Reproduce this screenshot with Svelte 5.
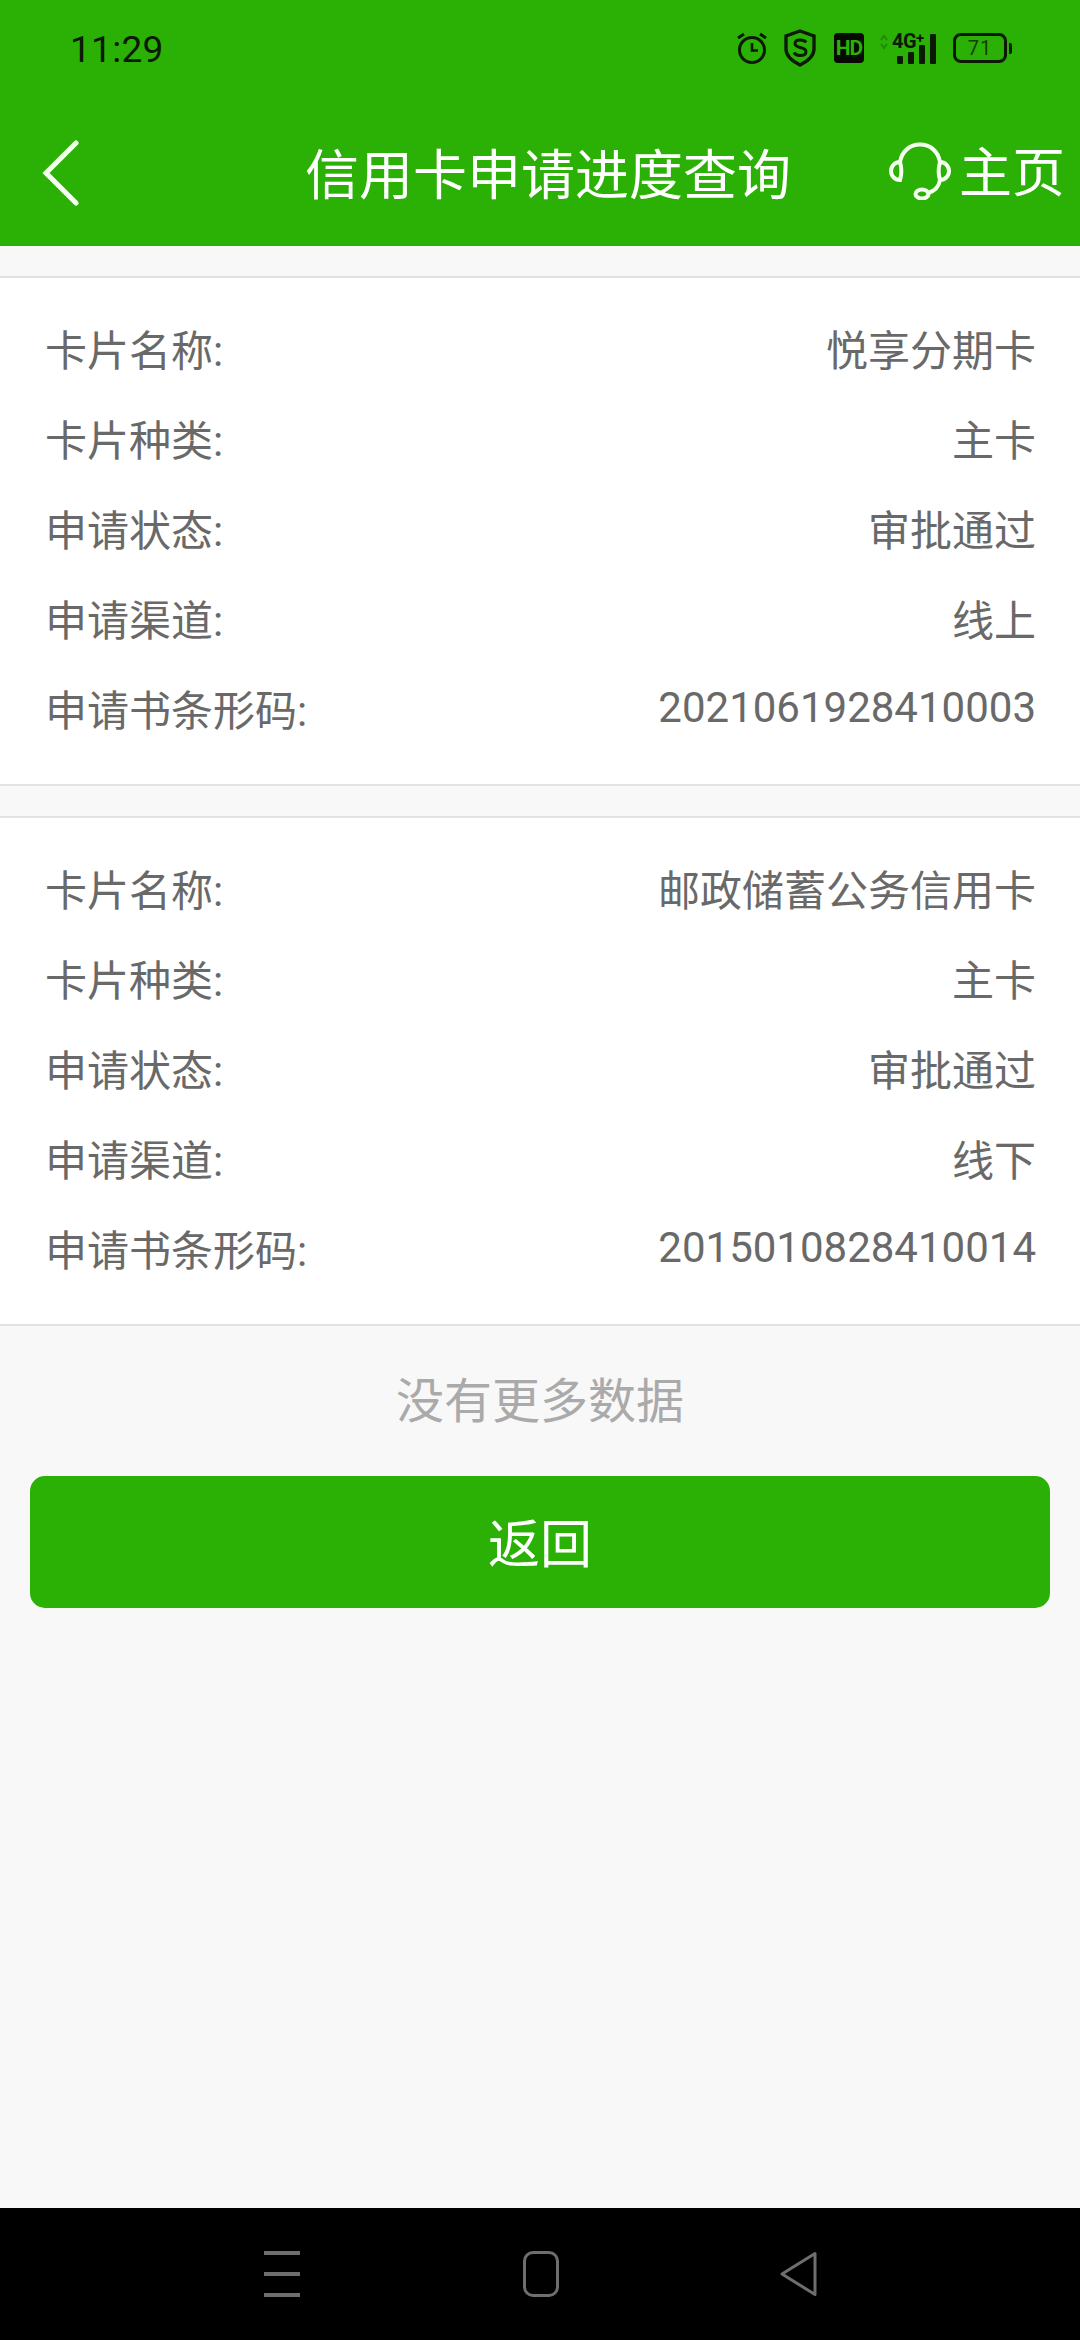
<script>
  const cards = [
    { name: '悦享分期卡', kind: '主卡', status: '审批通过', channel: '线上', code: '2021061928410003' },
    { name: '邮政储蓄公务信用卡', kind: '主卡', status: '审批通过', channel: '线下', code: '2015010828410014' }
  ];
</script>

<div class="page">
  <header class="top">
    <div class="status">
      <span class="time">11:29</span>
      <div class="icons">
        <svg class="ic" width="34" height="34" viewBox="0 0 34 34" fill="none" stroke="#0b1a04" stroke-width="3">
          <circle cx="17" cy="19" r="12.5"/>
          <path d="M17 12v7.5h6" stroke-width="2.6"/>
          <path d="M3 7l6-4M31 7l-6-4" stroke-width="3"/>
        </svg>
        <svg class="ic shield" width="34" height="38" viewBox="0 0 34 38" fill="none" stroke="#0b1a04" stroke-width="3.4">
          <path d="M17 2l14 5v13c0 7-6 12-14 16C9 32 3 27 3 20V7z"/>
          <path d="M23 13.500c-1-2-3-2.500-6-2.500-3 0-5 1.500-5 3.800 0 5 11 2.500 11 8 0 2.500-2.500 3.700-6 3.700-3 0-5-1-6-3" stroke-width="3"/>
        </svg>
        <span class="hd">HD</span>
        <div class="signal">
          <svg class="arrows" width="8" height="16" viewBox="0 0 8 16" fill="none" stroke="#1f8a06" stroke-width="2">
            <path d="M1 6l3-4 3 4M1 10l3 4 3-4"/>
          </svg>
          <span class="net">4G<sup>+</sup></span>
          <div class="bars">
            <i class="b1"></i><i class="b2"></i><i class="b3"></i><i class="b4"></i>
          </div>
        </div>
        <div class="battery"><span>71</span></div>
        <i class="cap"></i>
      </div>
    </div>
    <nav class="bar">
      <svg class="back" width="40" height="66" viewBox="0 0 40 66" fill="none" stroke="#f4fff0" stroke-width="5" stroke-linecap="round">
        <path d="M35 3L5 33l30 30"/>
      </svg>
      <h1>信用卡申请进度查询</h1>
      <div class="home">
        <svg width="62" height="58" viewBox="0 0 62 58" fill="none" stroke="#f4fff0" stroke-width="4" stroke-linecap="round">
          <path d="M11 20C13 9 21 2.500 31 2.500s18 6.500 20 17.500"/>
          <path d="M11 20C6 20 2 24 2 29s4 9 9 9c1.500-5 1.500-13 0-18z"/>
          <path d="M51 20c5 0 9 4 9 9s-4 9-9 9c-1.500-5-1.500-13 0-18z"/>
          <path d="M51 38c-1 6-5 11-12 13"/>
          <ellipse cx="33" cy="52" rx="6.500" ry="4.500"/>
        </svg>
        <span>主页</span>
      </div>
    </nav>
  </header>

  <main class="content">
    {#each cards as c}
      <section class="card">
        <div class="row"><span>卡片名称:</span><span>{c.name}</span></div>
        <div class="row"><span>卡片种类:</span><span>{c.kind}</span></div>
        <div class="row"><span>申请状态:</span><span>{c.status}</span></div>
        <div class="row"><span>申请渠道:</span><span>{c.channel}</span></div>
        <div class="row"><span>申请书条形码:</span><span>{c.code}</span></div>
      </section>
    {/each}
    <p class="more">没有更多数据</p>
    <button class="ret">返回</button>
  </main>

  <footer class="navbar">
    <div class="menu"><i></i><i></i><i></i></div>
    <div class="square"></div>
    <svg width="38" height="46" viewBox="0 0 38 46" fill="none" stroke="#6e6e6e" stroke-width="3" stroke-linejoin="round">
      <path d="M35 2.500v41L2 23z"/>
    </svg>
  </footer>
</div>

<style>
  :global(body) { margin: 0; background: #f8f8f8; }
  .page {
    width: 1080px;
    height: 2340px;
    display: flex;
    flex-direction: column;
    font-family: Roboto, "Noto Sans CJK SC", sans-serif;
    background: #f8f8f8;
    overflow: hidden;
  }
  .top { background: #2bb106; height: 246px; flex: none; display: flex; flex-direction: column; }
  .status {
    height: 96px;
    box-sizing: border-box;
    padding: 0 0 0 70px;
    display: flex;
    align-items: center;
    justify-content: space-between;
  }
  .time { font-size: 37px; color: #0b1a04; letter-spacing: 0.3px; padding-top: 2px; }
  .icons { display: flex; align-items: center; margin-right: 68px; }
  .ic { display: block; }
  .shield { margin-left: 14px; }
  .hd {
    margin-left: 17px;
    width: 30px;
    height: 30px;
    background: #050a02;
    border-radius: 4px;
    color: #2bb106;
    font-size: 21px;
    font-weight: 700;
    line-height: 30px;
    text-align: center;
    letter-spacing: -1px;
  }
  .signal { margin-left: 16px; width: 55px; height: 32px; position: relative; }
  .arrows { position: absolute; left: 0; top: 2px; }
  .net {
    position: absolute; left: 12px; top: -1px;
    font-size: 20px; font-weight: 700; line-height: 20px; color: #0b1a04; letter-spacing: -0.5px;
  }
  .net sup { font-size: 15px; line-height: 0; vertical-align: 5px; }
  .bars { position: absolute; left: 17px; bottom: 0; display: flex; align-items: flex-end; gap: 5.5px; }
  .bars i { display: block; width: 5.5px; background: #0b1a04; border-radius: 1px; }
  .b1 { height: 8px; }
  .b2 { height: 12px; }
  .b3 { height: 19px; }
  .b4 { height: 30px; }
  .battery {
    margin-left: 18px;
    width: 54px;
    height: 30px;
    box-sizing: border-box;
    border: 3px solid #0b1a04;
    border-radius: 8px;
    display: flex;
    align-items: center;
    justify-content: center;
    font-size: 20px;
    color: #14400a;
    letter-spacing: 1px;
  }
  .cap { display: block; width: 3px; height: 11px; margin-left: 2px; background: #0b1a04; border-radius: 0 2px 2px 0; }
  .bar { height: 150px; display: flex; align-items: center; position: relative; }
  .back { position: absolute; left: 41px; top: 44px; }
  .bar h1 {
    margin: 0 0 0 305px;
    font-size: 54px;
    font-weight: 400;
    color: #fff;
    white-space: nowrap;
  }
  .home { position: absolute; right: 15px; top: 46px; display: flex; align-items: flex-start; gap: 8px; color: #fff; font-size: 53px; }
  .home span { line-height: 58px; margin-top: 3px; }
  .content { flex: 1; padding-top: 30px; }
  .card {
    background: #fff;
    border-top: 2px solid #e2e2e2;
    border-bottom: 2px solid #e2e2e2;
    margin-bottom: 30px;
    height: 510px;
    box-sizing: border-box;
    padding: 24px 44px 0 45px;
  }
  .card + .card { margin-bottom: 0; }
  .row {
    height: 90px;
    display: flex;
    justify-content: space-between;
    align-items: center;
    font-size: 42px;
    color: #696969;
  }
  .more { margin: 0; height: 150px; line-height: 152px; text-align: center; font-size: 48px; color: #aaa; }
  .ret {
    display: block;
    margin: 0 30px;
    width: 1020px;
    height: 132px;
    border: 0;
    border-radius: 15px;
    background: #2bb106;
    color: #fff;
    font-family: inherit;
    font-size: 52px;
    padding: 0 0 3px;
  }
  .navbar {
    height: 132px;
    flex: none;
    background: #000;
    display: flex;
    align-items: center;
    padding-left: 264px;
    box-sizing: border-box;
  }
  .menu { width: 36px; height: 46px; display: flex; flex-direction: column; justify-content: space-between; margin-right: 223px; }
  .menu i { display: block; height: 4px; background: #6e6e6e; }
  .square { width: 36px; height: 46px; box-sizing: border-box; border: 3px solid #6e6e6e; border-radius: 10px; margin-right: 221px; }
</style>
